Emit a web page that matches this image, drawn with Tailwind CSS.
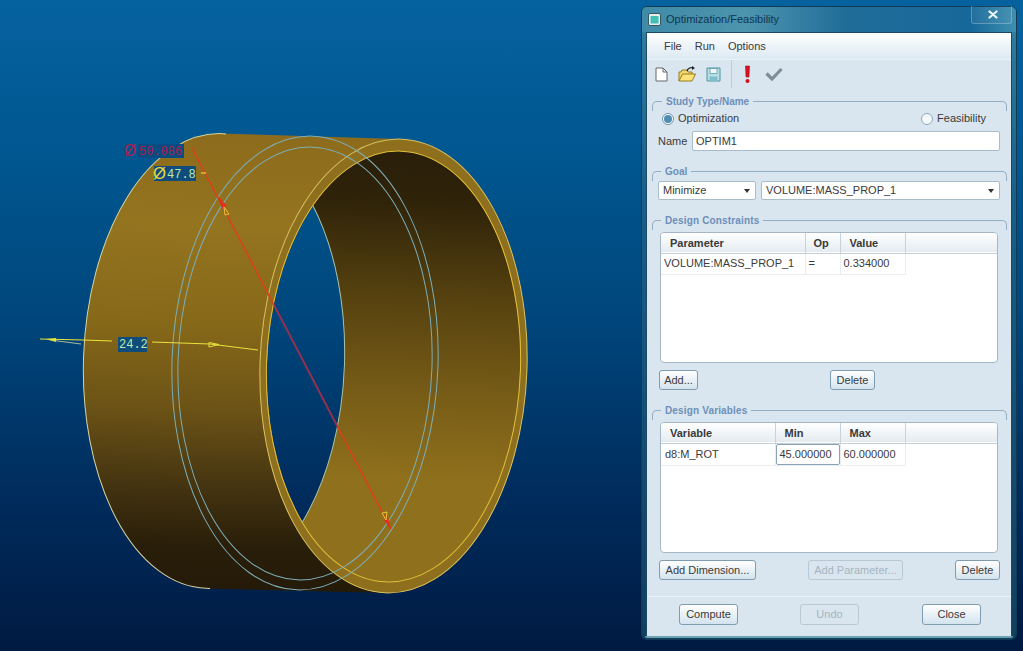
<!DOCTYPE html>
<html lang="en">
<head>
  <meta charset="UTF-8" />
  <title>Optimization/Feasibility</title>
  <script src="https://cdn.jsdelivr.net/npm/@tailwindcss/browser@4"></script>
</head>
<body class="overflow-hidden">
<div class="relative w-[1023px] h-[651px] overflow-hidden font-['Liberation_Sans',Arial,sans-serif] text-[11px] text-[#3a3a3a] bg-[linear-gradient(180deg,#06629f_0%,#00568f_25%,#00477d_48%,#002d5e_75%,#001a42_100%)]">

  <!-- 3D model -->
  <svg class="absolute inset-0" width="1023" height="651" viewBox="0 0 1023 651">
    <defs>
      <linearGradient id="bg" gradientUnits="userSpaceOnUse" x1="0" y1="0" x2="0" y2="651">
        <stop offset="0" stop-color="#06629f"/><stop offset=".25" stop-color="#00568f"/>
        <stop offset=".48" stop-color="#00477d"/><stop offset=".75" stop-color="#002d5e"/>
        <stop offset="1" stop-color="#001a42"/>
      </linearGradient>
      <linearGradient id="outer" gradientUnits="userSpaceOnUse" x1="0" y1="133" x2="0" y2="593">
        <stop offset="0" stop-color="#8c6c1c"/><stop offset=".2" stop-color="#94741f"/>
        <stop offset=".42" stop-color="#866819"/><stop offset=".6" stop-color="#6c5316"/>
        <stop offset=".78" stop-color="#423210"/><stop offset=".9" stop-color="#291e09"/>
        <stop offset="1" stop-color="#241a08"/>
      </linearGradient>
      <linearGradient id="inner" gradientUnits="userSpaceOnUse" x1="0" y1="150" x2="0" y2="590">
        <stop offset="0" stop-color="#291e09"/><stop offset=".12" stop-color="#2f2309"/>
        <stop offset=".32" stop-color="#54400f"/><stop offset=".55" stop-color="#775c17"/>
        <stop offset=".75" stop-color="#8f701c"/><stop offset="1" stop-color="#8f701c"/>
      </linearGradient>
      <clipPath id="frontInner"><ellipse cx="393.5" cy="366.5" rx="126.5" ry="215.5" transform="rotate(2 393.5 366.5)"/></clipPath>
      <clipPath id="backShape"><ellipse cx="214" cy="361" rx="130.5" ry="227.5" transform="rotate(2 214 361)"/></clipPath>
      <clipPath id="leftHalf"><rect x="0" y="0" width="218" height="651"/></clipPath>
    </defs>

    <ellipse cx="214" cy="361" rx="130.5" ry="227.5" transform="rotate(2 214 361)" fill="url(#outer)"/>
    <polygon points="220,133.500 398,139 388,593 208,588.500" fill="url(#outer)"/>
    <ellipse cx="393.500" cy="366" rx="133.500" ry="227" transform="rotate(2 393.500 366)" fill="url(#inner)"/>
    <g clip-path="url(#frontInner)">
      <rect x="0" y="0" width="1023" height="651" fill="url(#bg)" clip-path="url(#backShape)"/>
      <ellipse cx="214" cy="361" rx="130.5" ry="227.5" transform="rotate(2 214 361)" fill="none" stroke="#a9c2a2" stroke-width="1"/>
    </g>
    <path fill="#8e6f1d" fill-rule="evenodd" transform="rotate(2 393.500 366)" d="M260 366a133.500 227 0 1 0 267 0a133.500 227 0 1 0 -267 0zM267 366.500a126.500 215.500 0 1 0 253 0a126.500 215.500 0 1 0 -253 0z"/>

    <ellipse cx="214" cy="361" rx="130.5" ry="227.5" transform="rotate(2 214 361)" fill="none" stroke="#d8d49a" stroke-width="1" clip-path="url(#leftHalf)"/>
    <ellipse cx="393.500" cy="366" rx="133.500" ry="227" transform="rotate(2 393.500 366)" fill="none" stroke="#d9c262" stroke-width="1"/>
    <ellipse cx="393.500" cy="366.500" rx="127" ry="215.500" transform="rotate(2 393.500 366.500)" fill="none" stroke="#e0bf3c" stroke-width="1"/>
    <ellipse cx="305" cy="363" rx="133" ry="227" transform="rotate(2 305 363)" fill="none" stroke="#7eaeb8" stroke-width="1"/>
    <ellipse cx="305" cy="363.500" rx="127" ry="216.500" transform="rotate(2 305 363.500)" fill="none" stroke="#7eaeb8" stroke-width="1"/>

    <!-- red dimension -->
    <line x1="192" y1="148" x2="391" y2="529" stroke="#d8431a" stroke-width="1.600"/>
    <g clip-path="url(#frontInner)"><line x1="192" y1="148" x2="391" y2="529" stroke="#8c2c58" stroke-width="1.600" clip-path="url(#backShape)"/></g>
    <polygon points="218,196 227,206 222,209" fill="#e0321c"/>
    <polygon points="391,530 388,517 384,520" fill="#e0321c"/>
    <polygon points="224,207 229,214 225,215" fill="none" stroke="#e8c63c"/>
    <polygon points="382,513 387,512 386,520" fill="none" stroke="#e8c63c"/>
    <rect x="138" y="144" width="46" height="14" fill="#0a4c82"/>
    <text x="124" y="156" font-family="'Liberation Sans',sans-serif" font-size="17" textLength="12" lengthAdjust="spacingAndGlyphs" fill="#a81f4c">Ø</text>
    <text x="139" y="155" font-family="'Liberation Mono',monospace" font-size="12" fill="#a81f4c">50.086</text>

    <!-- yellow dimensions -->
    <rect x="154" y="166" width="42" height="15" fill="#0f4c7c"/>
    <text x="153" y="179" font-family="'Liberation Sans',sans-serif" font-size="17" textLength="13" lengthAdjust="spacingAndGlyphs" fill="#e8d83c">Ø</text>
    <text x="167" y="178" font-family="'Liberation Mono',monospace" font-size="12" fill="#bdeaa4">47.8</text>
    <line x1="201" y1="173" x2="206" y2="173" stroke="#e8d83c" stroke-width="1.200"/>

    <line x1="50" y1="340" x2="81" y2="344" stroke="#a7b89c"/>
    <polyline points="40,339 83,340 112,341" fill="none" stroke="#e8e23c" stroke-width="1.200"/>
    <polyline points="152,342 210,344 258,350" fill="none" stroke="#e8e23c" stroke-width="1.200"/>
    <polygon points="46,339 56,338 56,342" fill="#e8e23c"/>
    <polygon points="209,342.500 219,344.500 209,347" fill="none" stroke="#e8e23c"/>
    <rect x="118" y="337" width="29" height="15" fill="#0f4c7c"/>
    <text x="119" y="348" font-family="'Liberation Mono',monospace" font-size="12" fill="#bdeaa4">24.2</text>
  </svg>

  <!-- Dialog window -->
  <div class="absolute left-[641px] top-[6px] w-[376px] h-[634px] rounded-[6px] border border-[#123a55] flex flex-col bg-[linear-gradient(180deg,#3f8ba7,#2a7a9c_6%,#17608a_30%,#123f5e_100%)]">
    <div class="relative h-[25px] shrink-0 flex items-center pl-[6px] gap-[5px] rounded-t-[5px] bg-[linear-gradient(90deg,#3f8ba7,#4c94ae_28%,#1f6c98_55%,#17689a_88%,#3f8fb0)]">
      <svg width="13" height="13" viewBox="0 0 13 13">
        <rect x=".5" y=".5" width="12" height="12" rx="1.500" fill="#e8eeee" stroke="#3a5560"/>
        <rect x="2.500" y="3" width="8" height="7.500" fill="#3fc0b4"/>
      </svg>
      <span class="text-[#10364e]">Optimization/Feasibility</span>
      <div class="absolute right-[4px] top-[-1px] w-[41px] h-[18px] rounded-b-[3px] border border-white/25 border-t-0 bg-white/5 pl-[2px] flex items-center justify-center">
        <svg width="10" height="9" viewBox="0 0 10 9"><path d="M1.500 1.500 8.500 7.500M8.500 1.500 1.500 7.500" stroke="#edf3f6" stroke-width="2.200" stroke-linecap="round"/></svg>
      </div>
    </div>

    <div class="mx-[4px] h-[604px] shrink-0 bg-[#d9e6f0] border border-[#1c4a66] border-b-0 flex flex-col">
      <!-- Menu -->
      <div class="h-[27px] shrink-0 flex items-center gap-[13px] pl-[17px] border-b border-[#eaf2f7] bg-[linear-gradient(180deg,#ffffff,#dce9f2)]">
        <span>File</span><span>Run</span><span>Options</span>
      </div>

      <!-- Toolbar -->
      <div class="h-[28px] shrink-0 flex items-center relative">
        <svg class="ml-[8px]" width="13" height="15" viewBox="0 0 13 15"><path d="M1 1h7l4 4v9H1z" fill="#fff" stroke="#666"/><path d="M8 1v4h4" fill="none" stroke="#666"/></svg>
        <svg class="ml-[10px]" width="19" height="17" viewBox="0 0 19 17">
          <path d="M1 15V6h2l1-2h5l1 2h4v2" fill="#f5d86a" stroke="#9a7a20"/>
          <path d="M1 15 4.500 8h13L14 15z" fill="#fbe27a" stroke="#9a7a20"/>
          <path d="M9 5c1-3 4-4 6-3" fill="none" stroke="#222" stroke-width="1.300"/>
          <path d="M14 0l3 2-3 2z" fill="#222"/>
        </svg>
        <svg class="ml-[9px]" width="15" height="15" viewBox="0 0 15 15">
          <path d="M1 1h13v13H1z" fill="#b8dfe6" stroke="#4d93a3"/>
          <rect x="4" y="1.500" width="7" height="5" fill="#edf7f8" stroke="#4d93a3" stroke-width=".7"/>
          <rect x="3.500" y="9.500" width="8" height="4.500" fill="#7fbfcd"/>
        </svg>
        <div class="ml-[10px] w-px h-[28px] bg-[#bccdd9]"></div>
        <svg class="ml-[12px]" width="7" height="19" viewBox="0 0 7 19">
          <path d="M1.500 1h4L5 12H2z" fill="#e01020" stroke="#a0101c" stroke-width=".6"/>
          <circle cx="3.500" cy="16" r="2" fill="#d01020"/>
        </svg>
        <svg class="ml-[14px]" width="18" height="14" viewBox="0 0 18 14"><path d="M1.500 6.500 7 12 16.500 2" fill="none" stroke="#7f8e96" stroke-width="3.200"/></svg>
      </div>

      <!-- Study Type/Name -->
      <section class="relative mt-[7px] ml-[5px] mr-[4px]">
        <div class="absolute inset-x-0 top-[6px] h-[10px] rounded-t-[5px] border-t border-x border-[#93aec3]"></div>
        <h3 class="relative w-fit ml-[10px] px-[4px] h-[13px] leading-[13px] bg-[#d9e6f0] text-[10px] font-bold text-[#6d8fb9]">Study Type/Name</h3>
        <div class="relative mt-[3px] h-[15px] flex items-center justify-between pl-[10px] pr-[21px]">
          <label class="flex items-center gap-[4px]">
            <span class="w-[12px] h-[12px] rounded-full border border-[#6f93ad] bg-white flex items-center justify-center"><span class="w-[8px] h-[8px] rounded-full bg-[#4f8db4]"></span></span>
            Optimization
          </label>
          <label class="flex items-center gap-[4px]">
            <span class="w-[12px] h-[12px] rounded-full border border-[#8fa9bb] bg-white/70"></span>
            Feasibility
          </label>
        </div>
        <div class="mt-[5px] flex items-center pl-[6px] pr-[7px] gap-[3px]">
          <span class="w-[31px]">Name</span>
          <div class="flex-1 h-[20px] bg-white border border-[#a9bcc9] rounded-[2px] pl-[3px] leading-[18px]">OPTIM1</div>
        </div>
      </section>

      <!-- Goal -->
      <section class="relative mt-[14px] ml-[5px] mr-[4px]">
        <div class="absolute inset-x-0 top-[6px] h-[10px] rounded-t-[5px] border-t border-x border-[#93aec3]"></div>
        <h3 class="relative w-fit ml-[9px] px-[4px] h-[13px] leading-[13px] bg-[#d9e6f0] text-[10px] font-bold text-[#6d8fb9]">Goal</h3>
        <div class="relative mt-[3px] flex pl-[6px] pr-[7px] gap-[5px]">
          <div class="w-[98px] h-[19px] bg-white border border-[#a9bcc9] rounded-[2px] pl-[4px] pr-[5px] flex items-center justify-between">Minimize<span class="w-0 h-0 border-x-[3px] border-x-transparent border-t-[4px] border-t-[#333]"></span></div>
          <div class="flex-1 h-[19px] bg-white border border-[#a9bcc9] rounded-[2px] pl-[4px] pr-[5px] flex items-center justify-between">VOLUME:MASS_PROP_1<span class="w-0 h-0 border-x-[3px] border-x-transparent border-t-[4px] border-t-[#333]"></span></div>
        </div>
      </section>

      <!-- Design Constraints -->
      <section class="relative mt-[14px] ml-[5px] mr-[4px]">
        <div class="absolute inset-x-0 top-[6px] h-[10px] rounded-t-[5px] border-t border-x border-[#93aec3]"></div>
        <h3 class="relative w-fit ml-[9px] px-[4px] h-[13px] leading-[13px] bg-[#d9e6f0] text-[10px] tracking-[0.15px] font-bold text-[#6d8fb9]">Design Constraints</h3>
        <div class="relative mt-[5px] ml-[8px] mr-[9px] h-[131px] bg-white border border-[#a3b7c6] rounded-[4px] overflow-hidden">
          <table class="table-fixed w-full border-collapse">
            <thead>
              <tr class="h-[20px] bg-[linear-gradient(180deg,#ffffff,#e4ebf0)] border-b border-[#c3ced6] font-bold text-left">
                <th class="w-[144px] pl-[9px] border-r border-[#c8d2da]">Parameter</th>
                <th class="w-[35px] pl-[8px] border-r border-[#c8d2da]">Op</th>
                <th class="w-[65px] pl-[9px] border-r border-[#c8d2da]">Value</th>
                <th></th>
              </tr>
            </thead>
            <tbody>
              <tr class="h-[21px]">
                <td class="pl-[3px] border-r border-b border-[#e9edf0]">VOLUME:MASS_PROP_1</td>
                <td class="pl-[3px] border-r border-b border-[#e9edf0]">=</td>
                <td class="pl-[3px] border-r border-b border-[#e9edf0]">0.334000</td>
                <td></td>
              </tr>
            </tbody>
          </table>
        </div>
        <div class="relative mt-[7px] ml-[7px] flex">
          <button class="w-[39px] h-[20px] rounded-[3px] border border-[#7f9cb0] bg-[linear-gradient(180deg,#ffffff,#d3e3ee)]">Add...</button>
          <button class="ml-[132px] w-[45px] h-[20px] rounded-[3px] border border-[#7f9cb0] bg-[linear-gradient(180deg,#ffffff,#d3e3ee)]">Delete</button>
        </div>
      </section>

      <!-- Design Variables -->
      <section class="relative mt-[14px] ml-[5px] mr-[4px]">
        <div class="absolute inset-x-0 top-[6px] h-[10px] rounded-t-[5px] border-t border-x border-[#93aec3]"></div>
        <h3 class="relative w-fit ml-[9px] px-[4px] h-[13px] leading-[13px] bg-[#d9e6f0] text-[10px] tracking-[0.15px] font-bold text-[#6d8fb9]">Design Variables</h3>
        <div class="relative mt-[5px] ml-[8px] mr-[9px] h-[131px] bg-white border border-[#a3b7c6] rounded-[4px] overflow-hidden">
          <table class="table-fixed w-full border-collapse">
            <thead>
              <tr class="h-[20px] bg-[linear-gradient(180deg,#ffffff,#e4ebf0)] border-b border-[#c3ced6] font-bold text-left">
                <th class="w-[114px] pl-[9px] border-r border-[#c8d2da]">Variable</th>
                <th class="w-[65px] pl-[9px] border-r border-[#c8d2da]">Min</th>
                <th class="w-[65px] pl-[9px] border-r border-[#c8d2da]">Max</th>
                <th></th>
              </tr>
            </thead>
            <tbody>
              <tr class="h-[21px]">
                <td class="pl-[4px] border-r border-b border-[#e9edf0]">d8:M_ROT</td>
                <td class="p-0 border-r border-b border-[#e9edf0]"><div class="h-[21px] leading-[19px] pl-[3px] border border-[#8aa5b7] rounded-[2px]">45.000000</div></td>
                <td class="pl-[3px] border-r border-b border-[#e9edf0]">60.000000</td>
                <td></td>
              </tr>
            </tbody>
          </table>
        </div>
        <div class="relative mt-[7px] ml-[7px] mr-[7px] flex">
          <button class="w-[97px] h-[20px] rounded-[3px] border border-[#7f9cb0] bg-[linear-gradient(180deg,#ffffff,#d3e3ee)]">Add Dimension...</button>
          <button class="ml-[52px] w-[95px] h-[20px] rounded-[3px] border border-[#b7c9d5] text-[#a5b4bf] bg-[#d9e6f0]">Add Parameter...</button>
          <button class="ml-auto w-[45px] h-[20px] rounded-[3px] border border-[#7f9cb0] bg-[linear-gradient(180deg,#ffffff,#d3e3ee)]">Delete</button>
        </div>
      </section>

      <!-- Footer -->
      <div class="mt-[16px] flex-1 border-t border-[#eaf1f6] pt-[7px] pl-[32px] flex items-start">
        <button class="w-[59px] h-[21px] rounded-[3px] border border-[#7f9cb0] bg-[linear-gradient(180deg,#ffffff,#d3e3ee)]">Compute</button>
        <button class="ml-[62px] w-[59px] h-[21px] rounded-[3px] border border-[#b7c9d5] text-[#a5b4bf] bg-[#d9e6f0]">Undo</button>
        <button class="ml-[63px] w-[59px] h-[21px] rounded-[3px] border border-[#7f9cb0] bg-[linear-gradient(180deg,#ffffff,#d3e3ee)]">Close</button>
      </div>
    </div>
    <div class="mx-[3px] h-[2px] bg-[#6aa0b0] rounded-b-[2px]"></div>
  </div>
</div>
</body>
</html>
